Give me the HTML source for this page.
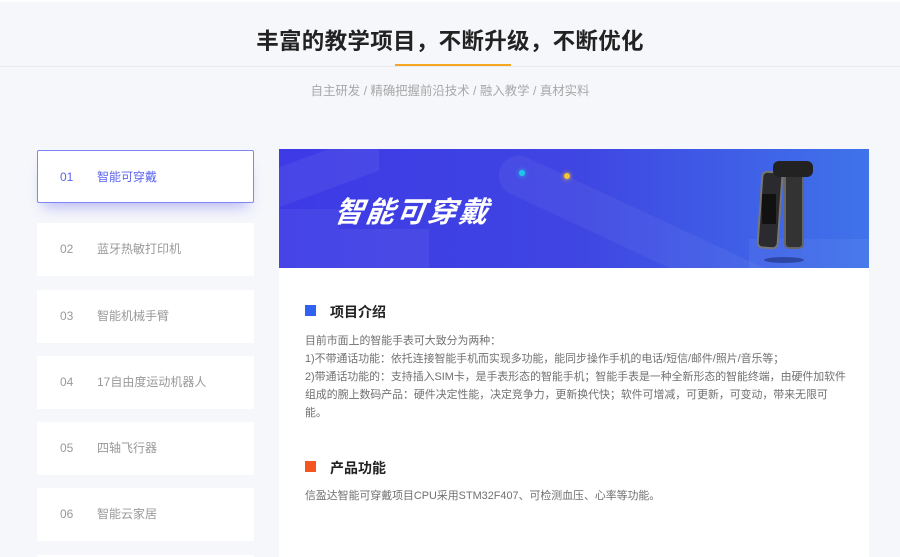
<!DOCTYPE html>
<html><head><meta charset="utf-8"><style>
*{margin:0;padding:0;box-sizing:border-box}
html,body{width:900px;height:557px;overflow:hidden}
body{background:#f6f7fb;font-family:"Liberation Sans","Noto Sans CJK SC",sans-serif;position:relative}
.top{position:absolute;left:0;top:0;width:900px;height:2px;background:#fff}
.hr{position:absolute;left:0;top:66px;width:900px;height:1px;background:#e9ebf0}
.ul{position:absolute;left:395px;top:64px;width:116px;height:2px;background:#f5a623}
h1{position:absolute;top:24px;width:900px;text-align:center;font-size:22.5px;font-weight:bold;color:#222;letter-spacing:0.3px}
.sub{position:absolute;top:81px;width:900px;text-align:center;font-size:12.4px;color:#a8a8a8}
.item{position:absolute;left:37px;width:217px;height:53px;background:#fff;font-size:12px;color:#999;line-height:53px}
.item .n{position:absolute;left:23px}
.item .t{position:absolute;left:60px}
.act{border:1px solid #7d86f2;border-radius:2px;color:#5b63ee;box-shadow:0 10px 14px -6px rgba(110,110,240,.45)}
.act .n{left:22px}.act .t{left:59px}
.banner{position:absolute;left:279px;top:149px;width:590px;height:119px;background:linear-gradient(90deg,#3d3ae6 0%,#3f45e2 50%,#3f73ea 100%);overflow:hidden}
.content{position:absolute;left:279px;top:268px;width:590px;height:289px;background:#fff}
.sq{position:absolute;width:11px;height:11px}
.hd{position:absolute;font-size:14px;font-weight:bold;color:#222}
.p{position:absolute;left:305px;font-size:10.9px;color:#707070;line-height:18px;width:560px;white-space:nowrap}
</style></head><body>
<div class="top"></div>
<h1>丰富的教学项目，不断升级，不断优化</h1>
<div class="hr"></div><div class="ul"></div>
<div class="sub">自主研发 / 精确把握前沿技术 / 融入教学 / 真材实料</div>

<div class="item act" style="top:150px"><span class="n">01</span><span class="t">智能可穿戴</span></div>
<div class="item" style="top:223px"><span class="n">02</span><span class="t">蓝牙热敏打印机</span></div>
<div class="item" style="top:290px"><span class="n">03</span><span class="t">智能机械手臂</span></div>
<div class="item" style="top:356px"><span class="n">04</span><span class="t">17自由度运动机器人</span></div>
<div class="item" style="top:422px"><span class="n">05</span><span class="t">四轴飞行器</span></div>
<div class="item" style="top:488px"><span class="n">06</span><span class="t">智能云家居</span></div>
<div class="item" style="top:555px;height:2px"></div>

<div class="banner">
<div style="position:absolute;left:0;top:0;width:100px;height:40px;background:rgba(255,255,255,.06);transform:skewY(-20deg)"></div>
<div style="position:absolute;left:230px;top:0;width:300px;height:40px;background:rgba(255,255,255,.05);border-radius:20px;transform:rotate(25deg);transform-origin:0 0"></div>
<div style="position:absolute;left:0;top:60px;width:60px;height:59px;background:rgba(255,255,255,.05)"></div>
<div style="position:absolute;left:60px;top:80px;width:90px;height:39px;background:rgba(255,255,255,.06)"></div>
<div style="position:absolute;left:470px;top:90px;width:120px;height:29px;background:rgba(255,255,255,.05)"></div>
<div style="position:absolute;left:240px;top:21px;width:6px;height:6px;border-radius:50%;background:#20c6e6;box-shadow:0 0 5px #20c6e6"></div>
<div style="position:absolute;left:285px;top:24px;width:6px;height:6px;border-radius:50%;background:#f6c431;box-shadow:0 0 5px #f6c431"></div>
<div style="position:absolute;left:56px;top:40px;font-size:29px;font-weight:bold;font-style:italic;color:#fff;letter-spacing:2px;transform:skewX(-8deg)">智能可穿戴</div>
<div style="position:absolute;left:480px;top:22px;width:22px;height:78px;background:#2b2b2f;border-radius:6px;transform:rotate(4deg);border:2px solid #777"></div>
<div style="position:absolute;left:483px;top:45px;width:14px;height:30px;background:#111"></div>
<div style="position:absolute;left:505px;top:20px;width:20px;height:80px;background:#333;border-radius:5px;border:2px solid #666"></div>
<div style="position:absolute;left:494px;top:12px;width:40px;height:16px;background:#222;border-radius:6px"></div>
<div style="position:absolute;left:485px;top:108px;width:40px;height:6px;border-radius:50%;background:rgba(0,0,40,.35)"></div>
</div>

<div class="content"></div>
<div class="sq" style="left:305px;top:305px;background:#2f62f0"></div>
<div class="hd" style="left:330px;top:302px">项目介绍</div>
<div class="p" style="top:332px">目前市面上的智能手表可大致分为两种：<br>1)不带通话功能：依托连接智能手机而实现多功能，能同步操作手机的电话/短信/邮件/照片/音乐等；<br>2)带通话功能的：支持插入SIM卡，是手表形态的智能手机；智能手表是一种全新形态的智能终端，由硬件加软件<br>组成的腕上数码产品：硬件决定性能，决定竞争力，更新换代快；软件可增减，可更新，可变动，带来无限可<br>能。</div>
<div class="sq" style="left:305px;top:461px;background:#f5561f"></div>
<div class="hd" style="left:330px;top:458px">产品功能</div>
<div class="p" style="top:487px">信盈达智能可穿戴项目CPU采用STM32F407、可检测血压、心率等功能。</div>
</body></html>
